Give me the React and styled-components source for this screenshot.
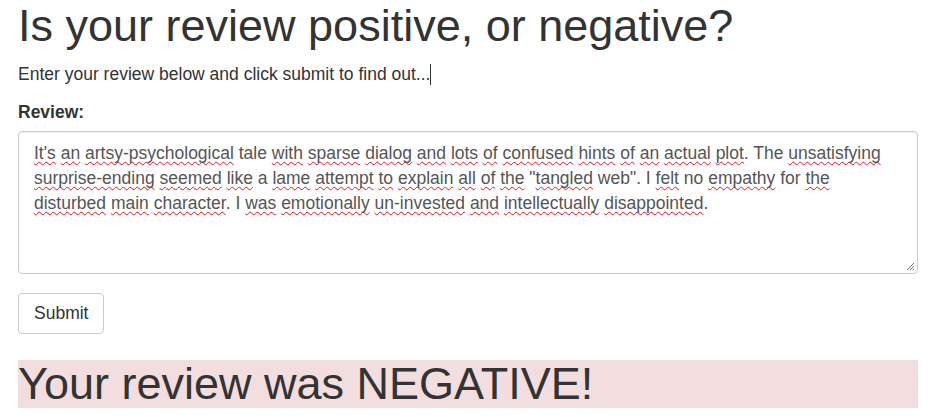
import React from 'react';
import styled, { createGlobalStyle } from 'styled-components';

const GlobalStyle = createGlobalStyle`
  html, body {
    margin: 0;
    padding: 0;
    background: #fff;
  }
  body {
    font-family: "Liberation Sans", Arial, sans-serif;
    color: #333;
  }
`;

const Page = styled.div`
  width: 900px;
  padding: 0 15px 0 18px;
`;

const Title = styled.h1`
  margin: 0;
  padding-top: 1px;
  font-size: 45px;
  font-weight: 400;
  line-height: 50px;
  color: #333;
`;

const Lead = styled.p`
  margin: 11px 0 0;
  font-size: 17.5px;
  line-height: 25px;
  color: #333;
`;

const Caret = styled.span`
  display: inline-block;
  width: 1px;
  height: 21px;
  background: #333;
  vertical-align: -5px;
`;

const Label = styled.label`
  display: block;
  margin-top: 13px;
  font-size: 17.5px;
  font-weight: 700;
  line-height: 25px;
`;

const TextBox = styled.div`
  position: relative;
  box-sizing: border-box;
  margin-top: 6px;
  height: 143px;
  padding: 9px 15px;
  border: 1px solid #ccc;
  border-radius: 4px;
  box-shadow: inset 0 1px 1px rgba(0, 0, 0, 0.075);
  font-size: 17.5px;
  line-height: 25px;
  color: #555;
`;

const Misspelled = styled.span`
  text-decoration: underline wavy #e0141e;
  text-decoration-thickness: 1px;
  text-underline-offset: 2px;
  text-decoration-skip-ink: none;
`;

const Grip = styled.svg`
  position: absolute;
  right: 2px;
  bottom: 2px;
`;

const SubmitButton = styled.button`
  display: block;
  margin-top: 19px;
  padding: 7px 15px;
  font-family: inherit;
  font-size: 17.5px;
  line-height: 25px;
  color: #333;
  background: #fff;
  border: 1px solid #ccc;
  border-radius: 4px;
`;

const Result = styled.h1`
  margin: 26px 0 0;
  height: 48px;
  font-size: 45px;
  font-weight: 400;
  line-height: 48px;
  color: #333;
  background: #f2dede;
`;

const review = [
  ["It's", 1], [' '], ['an', 1], [' '], ['artsy-psychological', 1], [' tale '],
  ['with', 1], [' '], ['sparse', 1], [' '], ['dialog', 1], [' '], ['and', 1], [' '],
  ['lots', 1], [' '], ['of', 1], [' '], ['confused', 1], [' '], ['hints', 1], [' '],
  ['of', 1], [' '], ['an', 1], [' '], ['actual', 1], [' '], ['plot', 1], ['. The '],
  ['unsatisfying', 1], [' '], ['surprise-ending', 1], [' '], ['seemed', 1], [' '],
  ['like', 1], [' a '], ['lame', 1], [' '], ['attempt', 1], [' '], ['to', 1], [' '],
  ['explain', 1], [' '], ['all', 1], [' '], ['of', 1], [' '], ['the', 1], [' "'],
  ['tangled', 1], [' web". I '], ['felt', 1], [' no '], ['empathy', 1], [' for '],
  ['the', 1], [' '], ['disturbed', 1], [' '], ['main', 1], [' '], ['character', 1],
  ['. I '], ['was', 1], [' '], ['emotionally', 1], [' '], ['un-invested', 1], [' '],
  ['and', 1], [' '], ['intellectually', 1], [' '], ['disappointed', 1], ['.'],
];

const App = () => (
  <Page>
    <GlobalStyle />
    <Title>Is your review positive, or negative?</Title>
    <Lead>
      Enter your review below and click submit to find out...<Caret />
    </Lead>
    <Label>Review:</Label>
    <TextBox role="textbox" aria-multiline="true">
      {review.map(([text, wrong], i) =>
        wrong ? <Misspelled key={i}>{text}</Misspelled> : <React.Fragment key={i}>{text}</React.Fragment>
      )}
      <Grip width="10" height="10" viewBox="0 0 10 10">
        <path d="M9 2 L2 9 M9 5 L5 9 M9 8 L8 9" stroke="#777" strokeWidth="1" />
      </Grip>
    </TextBox>
    <SubmitButton>Submit</SubmitButton>
    <Result>Your review was NEGATIVE!</Result>
  </Page>
);

export default App;
